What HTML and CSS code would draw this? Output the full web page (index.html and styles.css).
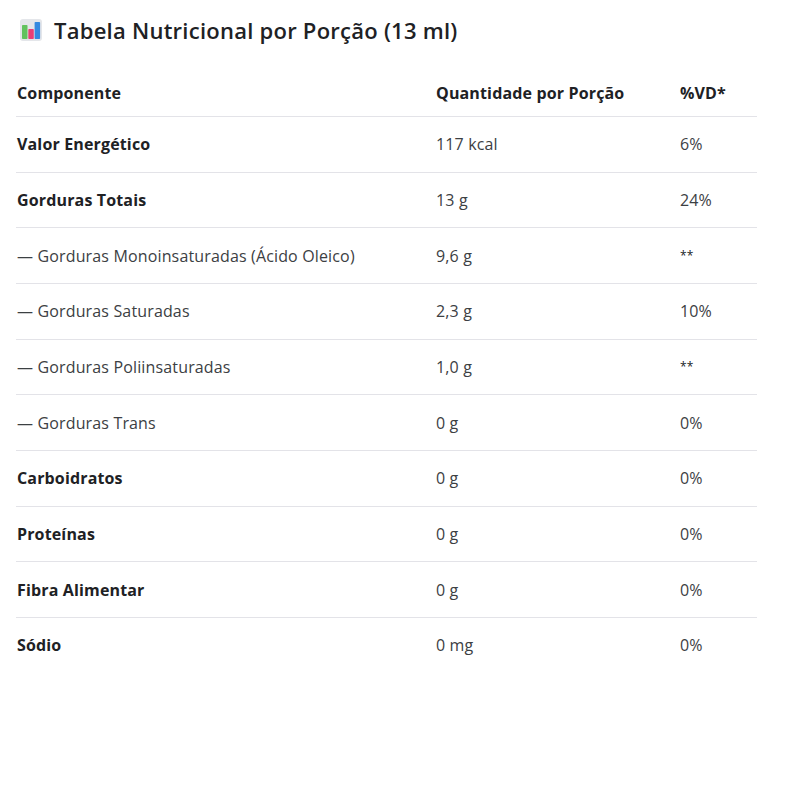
FILE: index.html
```html
<!DOCTYPE html>
<html lang="pt-BR">
<head>
<meta charset="utf-8">
<title>Tabela Nutricional</title>
<link rel="stylesheet" href="styles.css">
</head>
<body>
<div class="page">
  <h2 class="title">
    <svg class="icon" width="22" height="22" viewBox="0 0 22 22" aria-hidden="true">
      <rect x="0" y="0" width="22" height="22" rx="3" fill="#e4e6ea"/>
      <rect x="2" y="6" width="5.5" height="14" rx="0.8" fill="#62c25e"/>
      <rect x="8.3" y="10" width="5.5" height="10" rx="0.8" fill="#e83f76"/>
      <rect x="14.6" y="3" width="5.5" height="17" rx="0.8" fill="#3489e0"/>
    </svg>
    <span>Tabela Nutricional por Porção (13 ml)</span>
  </h2>
  <div class="table">
    <div class="row head"><div>Componente</div><div>Quantidade por Porção</div><div>%VD*</div></div>
    <div class="row main"><div>Valor Energético</div><div>117 kcal</div><div>6%</div></div>
    <div class="row main"><div>Gorduras Totais</div><div>13 g</div><div>24%</div></div>
    <div class="row sub"><div>— Gorduras Monoinsaturadas (Ácido Oleico)</div><div>9,6 g</div><div class="stars">**</div></div>
    <div class="row sub"><div>— Gorduras Saturadas</div><div>2,3 g</div><div>10%</div></div>
    <div class="row sub"><div>— Gorduras Poliinsaturadas</div><div>1,0 g</div><div class="stars">**</div></div>
    <div class="row sub"><div>— Gorduras Trans</div><div>0 g</div><div>0%</div></div>
    <div class="row main"><div>Carboidratos</div><div>0 g</div><div>0%</div></div>
    <div class="row main"><div>Proteínas</div><div>0 g</div><div>0%</div></div>
    <div class="row main"><div>Fibra Alimentar</div><div>0 g</div><div>0%</div></div>
    <div class="row main last"><div>Sódio</div><div>0 mg</div><div>0%</div></div>
  </div>
</div>
</body>
</html>
```
FILE: styles.css
```css
html, body {
  margin: 0;
  padding: 0;
  background: #ffffff;
}
body {
  font-family: "Open Sans", "Liberation Sans", sans-serif;
  color: #3c4043;
}
.page {
  padding: 18px 43px 0 16px;
}
.title {
  display: flex;
  align-items: center;
  gap: 12px;
  margin: 0 0 0 4px;
  font-size: 22px;
  letter-spacing: 0.25px;
  font-weight: 600;
  color: #202124;
  height: 24px;
}
.icon {
  flex: none;
}
.table {
  margin-top: 27px;
}
.row {
  display: grid;
  grid-template-columns: 419px 244px 1fr;
  align-items: center;
  height: 54.67px;
  border-bottom: 1px solid #e3e3e8;
  font-size: 16px;
  letter-spacing: 0.15px;
}
.row > div {
  padding-left: 1px;
  white-space: nowrap;
}
.row.head {
  height: 47px;
  font-weight: 700;
  color: #202124;
}
.row.main > div:first-child {
  font-weight: 700;
  color: #202124;
}
.stars {
  font-size: 12px;
  color: #202124;
}
.row.last {
  border-bottom: none;
}
```
